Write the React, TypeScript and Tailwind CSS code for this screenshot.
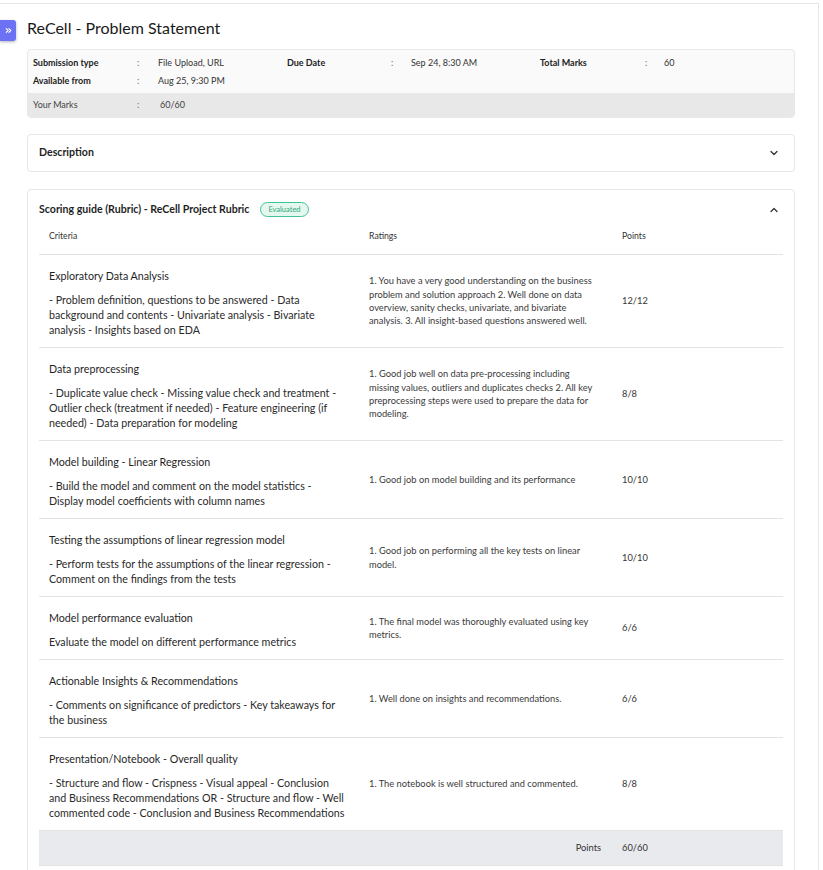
import React from "react";
import { ChevronDown, ChevronUp, ChevronsRight } from "lucide-react";

const rows = [
  {
    title: "Exploratory Data Analysis",
    desc: "- Problem definition, questions to be answered - Data background and contents - Univariate analysis - Bivariate analysis - Insights based on EDA",
    rating:
      "1. You have a very good understanding on the business problem and solution approach 2. Well done on data overview, sanity checks, univariate, and bivariate analysis. 3. All insight-based questions answered well.",
    points: "12/12",
  },
  {
    title: "Data preprocessing",
    desc: "- Duplicate value check - Missing value check and treatment - Outlier check (treatment if needed) - Feature engineering (if needed) - Data preparation for modeling",
    rating:
      "1. Good job well on data pre-processing including missing values, outliers and duplicates checks 2. All key preprocessing steps were used to prepare the data for modeling.",
    points: "8/8",
  },
  {
    title: "Model building - Linear Regression",
    desc: "- Build the model and comment on the model statistics - Display model coefficients with column names",
    rating: "1. Good job on model building and its performance",
    points: "10/10",
  },
  {
    title: "Testing the assumptions of linear regression model",
    desc: "- Perform tests for the assumptions of the linear regression - Comment on the findings from the tests",
    rating: "1. Good job on performing all the key tests on linear model.",
    points: "10/10",
  },
  {
    title: "Model performance evaluation",
    desc: "Evaluate the model on different performance metrics",
    rating: "1. The final model was thoroughly evaluated using key metrics.",
    points: "6/6",
  },
  {
    title: "Actionable Insights & Recommendations",
    desc: "- Comments on significance of predictors - Key takeaways for the business",
    rating: "1. Well done on insights and recommendations.",
    points: "6/6",
  },
  {
    title: "Presentation/Notebook - Overall quality",
    desc: "- Structure and flow - Crispness - Visual appeal - Conclusion and Business Recommendations OR - Structure and flow - Well commented code - Conclusion and Business Recommendations",
    rating: "1. The notebook is well structured and commented.",
    points: "8/8",
  },
];

function InfoItem({ label, value }: { label: string; value: string }) {
  return (
    <>
      <div className="font-bold text-[#222]">{label}</div>
      <div className="text-[#666]">:</div>
      <div className="text-[#333]">{value}</div>
    </>
  );
}

export default function App() {
  return (
    <div className="relative min-h-[870px] bg-white font-[Lato,sans-serif] text-[#222]">
      <div className="pt-[3px]">
        <div className="w-[819px] border-t border-r border-[#e6e6e6] pl-[27px] pr-[23px] pb-6 min-h-[867px]">
          <button className="absolute left-0 top-[20px] flex h-[21px] w-[16px] items-center justify-center rounded-r-[3px] bg-[#6c72f3] text-white shadow-[0_1px_3px_rgba(0,0,0,0.3)]">
            <ChevronsRight size={9} strokeWidth={3} />
          </button>
          <h1 className="pt-[12px] text-[16px] leading-[24px] text-[#1a1a1a]">
            ReCell - Problem Statement
          </h1>

          <div className="mt-[9px] overflow-hidden rounded-[4px] border border-[#e8e8e8] bg-[#fafafa] text-[9px]">
            <div className="grid grid-cols-[104px_21px_129px_104px_20px_129px_105px_19px_1fr] pl-[5px] pt-[4px] pb-[3px] leading-[18px]">
              <InfoItem label="Submission type" value="File Upload, URL" />
              <InfoItem label="Due Date" value="Sep 24, 8:30 AM" />
              <InfoItem label="Total Marks" value="60" />
              <InfoItem label="Available from" value="Aug 25, 9:30 PM" />
            </div>
            <div className="grid h-[24px] grid-cols-[104px_23px_1fr] items-center bg-[#e8e8e8] pl-[5px] text-[#444]">
              <div>Your Marks</div>
              <div className="text-[#666]">:</div>
              <div>60/60</div>
            </div>
          </div>

          <div className="mt-[16px] flex h-[38px] items-center justify-between rounded-[4px] border border-[#e6e6e6] pl-[11px] pr-[14px]">
            <span className="text-[10.6px] font-bold text-[#1f1f1f]">Description</span>
            <ChevronDown size={12} strokeWidth={2.5} className="text-[#333]" />
          </div>

          <div className="mt-[17px] rounded-[4px] border border-[#e6e6e6] px-[11px]">
            <div className="flex items-center justify-between pt-[12px] pr-[3px]">
              <div className="flex items-center gap-[11px]">
                <span className="text-[10.6px] font-bold leading-[15px] text-[#1f1f1f]">
                  Scoring guide (Rubric) - ReCell Project Rubric
                </span>
                <span className="flex h-[15px] items-center rounded-full border border-[#3fc497] bg-[#e6f7ef] px-[7px] text-[7.5px] text-[#2aa77a]">
                  Evaluated
                </span>
              </div>
              <ChevronUp size={12} strokeWidth={2.5} className="text-[#333]" />
            </div>

            <div className="grid grid-cols-[320px_253px_1fr] border-b border-[#e3e3e3] text-[8.7px] leading-[13px] text-[#333]">
              <div className="px-[10px] py-[12px]">Criteria</div>
              <div className="px-[10px] py-[12px]">Ratings</div>
              <div className="px-[10px] py-[12px]">Points</div>
            </div>

            {rows.map((r) => (
              <div
                key={r.title}
                className="grid grid-cols-[320px_253px_1fr] border-b border-[#e3e3e3]"
              >
                <div className="pl-[10px] pr-[11px] pt-[13px] pb-[10px]">
                  <div className="text-[10.7px] leading-[15px] text-[#1f1f1f]">{r.title}</div>
                  <div className="mt-[9px] text-[10.7px] leading-[15px] text-[#2a2a2a]">
                    {r.desc}
                  </div>
                </div>
                <div className="flex items-center px-[10px] text-[9.3px] leading-[13.3px] text-[#3a3a3a]">
                  <div className="pr-[3px]">{r.rating}</div>
                </div>
                <div className="flex items-center px-[10px] text-[9.3px] text-[#333]">
                  {r.points}
                </div>
              </div>
            ))}

            <div className="grid h-[35px] grid-cols-[573px_1fr] items-center border-b border-[#e3e3e3] bg-[#e9eaed] text-[9.3px] text-[#333]">
              <div className="pr-[11px] text-right">Points</div>
              <div className="px-[10px]">60/60</div>
            </div>
            <div className="h-[10px]" />
          </div>
        </div>
      </div>
    </div>
  );
}
